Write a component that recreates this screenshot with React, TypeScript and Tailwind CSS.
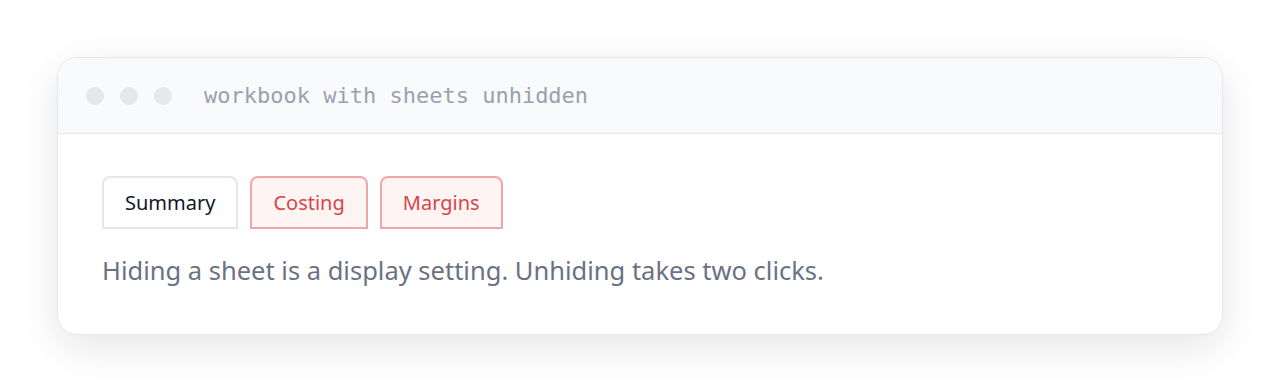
import React from "react";

const tabs = [
  { name: "Summary", hidden: false },
  { name: "Costing", hidden: true },
  { name: "Margins", hidden: true },
];

const App = () => {
  return (
    <div className="w-[1280px] h-[392px] bg-white p-[57px]">
      <div className="h-[278px] rounded-[20px] border border-gray-200 bg-white shadow-[0_12px_40px_rgba(0,0,0,0.10)] overflow-hidden">
        <div className="h-[76px] flex items-center bg-gray-50 border-b border-gray-200 pl-[28px]">
          <div className="flex gap-4">
            <span className="w-[18px] h-[18px] rounded-full bg-gray-200"></span>
            <span className="w-[18px] h-[18px] rounded-full bg-gray-200"></span>
            <span className="w-[18px] h-[18px] rounded-full bg-gray-200"></span>
          </div>
          <span className="ml-[32px] text-[22px] text-gray-400 font-['DejaVu_Sans_Mono',monospace]">
            workbook with sheets unhidden
          </span>
        </div>
        <div className="px-[44px] pt-[42px] font-['Noto_Sans',sans-serif]">
          <div className="flex gap-[12px]">
            {tabs.map((t) => (
              <div
                key={t.name}
                className={
                  t.hidden
                    ? "h-[53px] px-[21px] flex items-center rounded-t-lg border-2 border-[#f0a5a8] bg-[#fef4f4] text-[#d94548] text-[20px]"
                    : "h-[53px] px-[21px] flex items-center rounded-t-lg border-2 border-gray-200 bg-white text-gray-900 text-[20px]"
                }
              >
                {t.name}
              </div>
            ))}
          </div>
          <p className="mt-[24px] text-[25.5px] leading-[34px] text-gray-500">
            Hiding a sheet is a display setting. Unhiding takes two clicks.
          </p>
        </div>
      </div>
    </div>
  );
};

export default App;
